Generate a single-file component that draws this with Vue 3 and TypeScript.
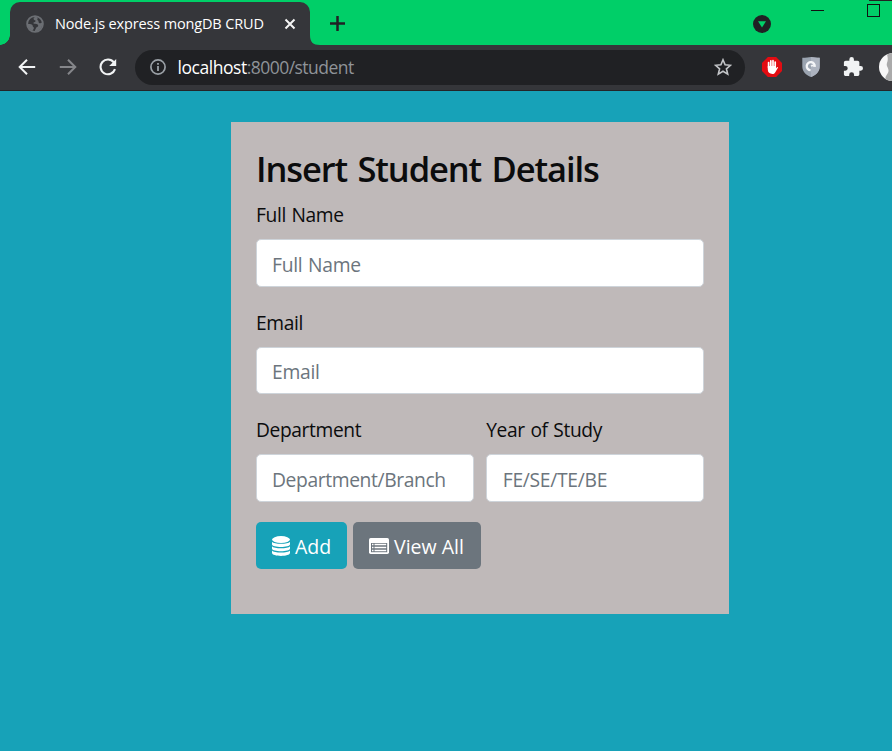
<script setup lang="ts">
import { ref } from 'vue'

interface Field {
  id: string
  label: string
  placeholder: string
  half?: boolean
}

const fields: Field[] = [
  { id: 'name', label: 'Full Name', placeholder: 'Full Name' },
  { id: 'email', label: 'Email', placeholder: 'Email' },
  { id: 'department', label: 'Department', placeholder: 'Department/Branch', half: true },
  { id: 'year', label: 'Year of Study', placeholder: 'FE/SE/TE/BE', half: true },
]

const values = ref<Record<string, string>>({ name: '', email: '', department: '', year: '' })
</script>

<template>
  <div class="window">
    <header class="tabs">
      <div class="tab">
        <svg class="globe" viewBox="0 0 18 18" width="18" height="18">
          <circle cx="9" cy="9" r="7.9" fill="none" stroke="#6b6e73" stroke-width="1.8" />
          <path d="M9.7 1.5C8 2.4 7.2 3.3 7.8 4.4c.5.9 1.8.6 1.8 1.7 0 1-1.3.9-2 1.5-.5.5-.2 1.1.5 1.2 1.5.2 3.3.1 3.9 1.2.5.9 0 1.7-1 2.1-1.1.4-.9 1.5-1.7 2.4l-.8 2.2c4.5-.2 7.8-3.5 7.8-7.7 0-.5 0-1-.2-1.5-1 .9-2.4 1.1-3.2.2-.6-.7-.1-1.6-.8-2.2-.5-.4-1-.7-.7-1.5l.5-1.3zM1.4 8.3c1.5 1.3 3.5.5 4.7 1.4 1 .7.3 1.7 1.2 2.3.8.6.8 1.3.2 2.1l-.8 1.7C3.3 14.8 1.2 12 1.4 8.3z" fill="#6b6e73" />
        </svg>
        <span class="tab-title">Node.js express mongDB CRUD</span>
        <svg class="close" viewBox="0 0 12 12" width="12" height="12"><path d="M1.5 1.5l9 9M10.5 1.5l-9 9" stroke="#f4f4f4" stroke-width="2" /></svg>
      </div>
      <svg class="plus" viewBox="0 0 16 16" width="16" height="16"><path d="M8.5 1v15M1 8.5h15" stroke="#202124" stroke-width="2.5" /></svg>
      <svg class="curve" viewBox="0 0 10 10" width="10" height="10"><path d="M0 0C0 7 3 10 10 10H0z" fill="#35363a" /></svg>
      <svg class="drop" viewBox="0 0 18 18" width="18" height="18"><circle cx="9" cy="9" r="9" fill="#202124" /><path d="M5 6.2h8L9 12.4z" fill="#00cf68" /></svg>
      <i class="minimize"></i>
      <i class="maximize"></i>
      <i class="edge"></i>
    </header>

    <nav class="toolbar">
      <svg class="back" viewBox="0 0 18 18" width="18" height="18"><path d="M17.2 9H2M9 1.7L1.7 9 9 16.3" fill="none" stroke="#f1f3f4" stroke-width="2" /></svg>
      <svg class="forward" viewBox="0 0 18 18" width="18" height="18"><path d="M.8 9H16M9 1.7L16.3 9 9 16.3" fill="none" stroke="#85868a" stroke-width="2" /></svg>
      <svg class="reload" viewBox="0 0 18 18" width="18" height="18"><path d="M14.8 4.3A7.4 7.4 0 1 0 16 11.2" fill="none" stroke="#f1f3f4" stroke-width="2.1" /><path d="M17.2 1v7h-7z" fill="#f1f3f4" /></svg>
      <div class="address">
        <svg class="info" viewBox="0 0 16 16" width="16" height="16"><circle cx="8" cy="8" r="7.1" fill="none" stroke="#9aa0a6" stroke-width="1.7" /><path d="M8 7v5M8 4v1.8" stroke="#9aa0a6" stroke-width="1.8" /></svg>
        <span class="url"><span class="host">localhost</span><span class="path">:8000/student</span></span>
        <svg class="star" viewBox="0 0 18 18" width="18" height="18"><path d="M9 1.8l2.1 5 5.4.5-4.1 3.5 1.3 5.3L9 13.3l-4.7 2.8 1.3-5.3-4.1-3.5 5.4-.5z" fill="none" stroke="#c3c5c8" stroke-width="1.6" /></svg>
      </div>
      <svg class="stop" viewBox="0 0 20 20" width="20" height="20">
        <path d="M5.9 0h8.2L20 5.9v8.2L14.1 20H5.9L0 14.1V5.9z" fill="#e30c12" />
        <path d="M6.6 10.7V5.6M8.8 9.5V3.9M11 9.5V3.7M13.2 10V5" stroke="#fff" stroke-width="1.7" stroke-linecap="round" />
        <path d="M5.8 9h8.2v2.2l1-.9c.8-.5 1.2.1.8.8L13 15.7c-.6.9-1.2 1.2-2.5 1.2-3 0-4.7-1.5-4.7-4.4z" fill="#fff" />
      </svg>
      <svg class="shield" viewBox="0 0 18 20" width="18" height="20">
        <path d="M.3.8C4 .7 6.5.5 9 0c2.5.5 5 .7 8.7.8v8.4C17.7 14.5 14 18 9 20 4 18 .3 14.5.3 9.2z" fill="#9ba4b0" />
        <path d="M9 0c2.5.5 5 .7 8.7.8v8.4C17.7 14.5 14 18 9 20z" fill="#adb3bf" />
        <path d="M12.7 9.8A4 4 0 1 0 8.6 13.2" fill="none" stroke="#f5f6f8" stroke-width="2.3" />
        <path d="M9 9.2c1.1-1 2.2-.8 2.8.3" fill="none" stroke="#f5f6f8" stroke-width="1.4" />
      </svg>
      <svg class="puzzle" viewBox="1 1 22 22" width="20" height="20"><path d="M20.5 11H19V7c0-1.1-.9-2-2-2h-4V3.5a2.5 2.5 0 0 0-5 0V5H4c-1.1 0-2 .9-2 2v3.8h1.500a2.7 2.7 0 0 1 0 5.4H2V20c0 1.1.9 2 2 2h3.8v-1.500a2.7 2.7 0 0 1 5.4 0V22H17c1.1 0 2-.9 2-2v-4h1.500a2.5 2.5 0 0 0 0-5z" fill="#f1f3f4" /></svg>
      <svg class="avatar" viewBox="0 0 13 28" width="13" height="28"><circle cx="14" cy="14" r="14" fill="#f7f7f7" /><path d="M8 1.5l5-1.5v28c-3-.2-5-1-6.500-2C6 22 10 21 9.500 17 9 14 7 13 8 10S9 5 8 1.500z" fill="#aaa" /></svg>
    </nav>

    <main class="page">
      <form class="card" @submit.prevent>
        <h3 class="title">Insert Student Details</h3>
        <div class="fields">
          <div v-for="field in fields" :key="field.id" class="field" :class="[field.id, { half: field.half }]">
            <label :for="field.id">{{ field.label }}</label>
            <input :id="field.id" v-model="values[field.id]" type="text" :placeholder="field.placeholder" />
          </div>
        </div>
        <div class="actions">
          <button class="btn add" type="submit">
            <svg viewBox="0 0 18 20" width="18" height="20" fill="#fff">
              <ellipse cx="9" cy="3.6" rx="9" ry="3.5" />
              <path d="M0 5.8c2 2.7 16 2.7 18 0v2.5c0 3.6-18 3.6-18 0z" />
              <path d="M0 10.2c2 2.7 16 2.7 18 0v2.4c0 3.6-18 3.6-18 0z" />
              <path d="M0 14.5c2 2.7 16 2.7 18 0v2.3c0 4.2-18 4.2-18 0z" />
            </svg>
            <span>Add</span>
          </button>
          <button class="btn view" type="button">
            <svg viewBox="0 0 20 16" width="20" height="16">
              <rect width="20" height="16" rx="1.7" fill="#fff" />
              <path d="M2 5h16.2v9.2H2z" fill="#6c757d" />
              <path d="M3 6.500h1.500M3 9.500h1.500M3 12.500h1.500M5.500 6.500h11.700M5.500 9.500h11.700M5.500 12.500h11.700" stroke="#fff" stroke-width="1.500" />
            </svg>
            <span>View All</span>
          </button>
        </div>
      </form>
    </main>
  </div>
</template>

<style>
body { margin: 0; overflow: hidden; }
</style>

<style scoped>
* { box-sizing: border-box; }
svg, i { flex: none; display: block; }
.window {
  width: 892px;
  height: 751px;
  overflow: hidden;
  display: flex;
  flex-direction: column;
  background: #17a2b8;
  font-family: "Open Sans", "Noto Sans", sans-serif;
}
.tabs { position: relative; height: 45px; flex: none; display: flex; background: #00cf68; padding: 2px 0 0 10px; }
.tabs::before { content: ""; position: absolute; left: 0; bottom: 0; width: 10px; height: 10px; background: radial-gradient(circle at 0 0, transparent 9.5px, #35363a 10px); }
.tab { width: 300px; height: 43px; display: flex; align-items: center; padding: 0 0 0 16px; border-radius: 10px 10px 0 0; background: #35363a; }
.tab-title { width: 209px; margin-left: 11px; color: #fff; font-size: 14.5px; line-height: 20px; letter-spacing: -.15px; white-space: nowrap; }
.close { margin-left: 20px; }
.curve { position: absolute; left: 310px; bottom: 0; }
.plus { margin: 13px 0 0 19px; }
.drop { margin: 13px 0 0 408px; }
.minimize { width: 13px; height: 1px; margin: 8px 0 0 40px; background: #111; }
.maximize { width: 13px; height: 13px; margin: 2px 0 0 43px; border: 1px solid #111; }
.edge { position: absolute; right: 0; top: 0; width: 23px; height: 1px; background: #222; }
.toolbar { height: 46px; flex: none; display: flex; align-items: center; padding: 0 0 1px 18px; background: #35363a; border-bottom: 1px solid #242528; }
.forward { margin-left: 23px; }
.reload { margin-left: 22px; }
.address { width: 610px; flex: none; height: 35px; display: flex; align-items: center; margin-left: 18px; padding: 0 13px 0 15px; border-radius: 18px; background: #202124; }
.url { flex: 1; margin-left: 11.5px; font-size: 17.5px; line-height: 24px; white-space: nowrap; }
.host { color: #fff; letter-spacing: -.45px; }
.path { color: #8f9398; letter-spacing: -.54px; }
.stop { margin-left: 17px; }
.shield { margin-left: 20px; }
.puzzle { margin-left: 23px; }
.avatar { margin-left: 16px; }
.page { flex: 1; display: flex; justify-content: center; align-items: flex-start; padding: 31px 0 0 68px; }
.card { width: 498px; height: 492px; padding: 25px; background: #bfb9b9; color: #0b0c0d; }
.title { height: 42.4px; margin: 0 0 10px; padding-top: 1px; font-size: 34.5px; line-height: 42px; font-weight: 560; letter-spacing: -1.1px; word-spacing: 2.5px; white-space: nowrap; }
.fields { display: grid; grid-template-columns: 217.75px 217.75px; column-gap: 12.5px; row-gap: 20px; }
.field { grid-column: 1 / -1; display: flex; flex-direction: column; }
.field.half { grid-column: auto; }
label { height: 30px; margin-bottom: 10px; padding-top: 1px; font-size: 19.2px; line-height: 30px; letter-spacing: -.37px; word-spacing: 1px; white-space: nowrap; }
input { width: 100%; height: 47.5px; padding: 2px 15px 0; border: 1px solid #ced4da; border-radius: 5px; background: #fff; color: #495057; font-family: inherit; font-size: 19.3px; letter-spacing: -.3px; word-spacing: 1px; outline: 0; }
.department input { letter-spacing: -.4px; }
.year input { padding-left: 15.5px; }
input::placeholder { color: #6c757d; opacity: 1; }
.actions { display: flex; gap: 6px; margin-top: 20px; }
.btn { height: 47px; display: flex; align-items: center; padding: 2px 0 0 16px; border: 0; border-radius: 5px; color: #fff; font-family: inherit; font-size: 19.5px; line-height: 30px; white-space: nowrap; }
.btn span { padding-top: 2px; }
.add { width: 91px; gap: 5px; background: #17a2b8; }
.view { width: 128px; gap: 5px; background: #6c757d; }
</style>
